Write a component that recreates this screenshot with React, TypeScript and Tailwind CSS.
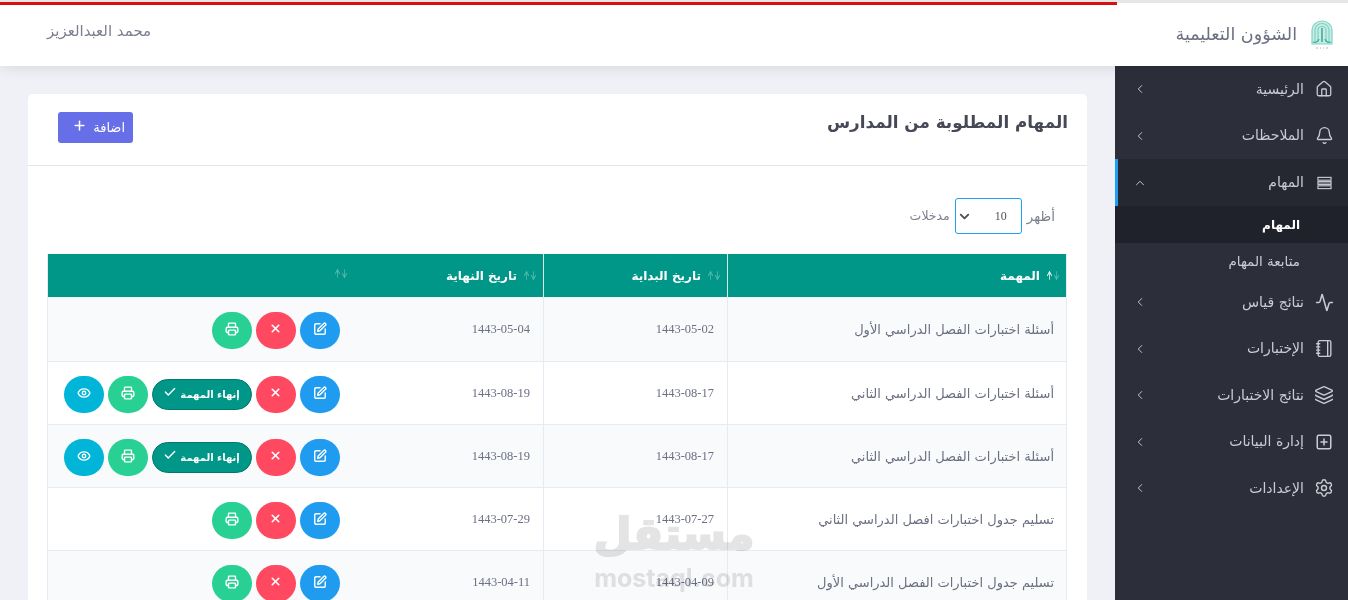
import React from 'react'
import { Bell, Check, ChevronDown, ChevronLeft, ChevronUp, Activity, Eye, House, Layers, Notebook, Plus, Printer, Settings, SquarePen, SquarePlus, X, ArrowUp, ArrowDown } from 'lucide-react'

const FONT = "font-['DejaVu_Sans',sans-serif]"

function ServerIcon({ className }: { className?: string }) {
  return (
    <svg className={className} viewBox="0 0 16 14" fill="none" stroke="currentColor" strokeWidth="1.2">
      <rect x="1" y="1" width="14" height="3" />
      <rect x="1" y="5.5" width="14" height="3" fill="currentColor" fillOpacity="0.35" />
      <rect x="1" y="10" width="14" height="3" />
    </svg>
  )
}

function Logo() {
  return (
    <svg className="w-[22px] h-[30px]" viewBox="0 0 22 30" fill="none" stroke="#7fd3c4" strokeWidth="1.2">
      <path d="M1 24V10a10 9 0 0 1 20 0v14H1z" fill="#c8ece5" />
      <path d="M4 22V10a7 6.5 0 0 1 14 0v12" />
      <path d="M7 22V10a4 3.5 0 0 1 8 0v12" />
      <path d="M11 8v14" stroke="#3fae9c" strokeWidth="1.6" />
      <path d="M2 22c3 1 5 0 6-3M20 22c-3 1-5 0-6-3" stroke="#3fae9c" />
      <path d="M5 28h2M9 28h1M12 28h1M15 28h2" stroke="#a9b8b6" />
    </svg>
  )
}

const MENU_TOP = [
  { label: 'الرئيسية', icon: <House className="w-[18px] h-[18px]" strokeWidth={1.7} /> },
  { label: 'الملاحظات', icon: <Bell className="w-[19px] h-[19px]" strokeWidth={1.7} /> },
]

const MENU_BOTTOM = [
  { label: 'نتائج قياس', icon: <Activity className="w-[19px] h-[19px]" strokeWidth={1.9} /> },
  { label: 'الإختبارات', icon: <Notebook className="w-[19px] h-[19px]" strokeWidth={1.7} /> },
  { label: 'نتائج الاختبارات', icon: <Layers className="w-[20px] h-[20px]" strokeWidth={1.7} /> },
  { label: 'إدارة البيانات', icon: <SquarePlus className="w-[18px] h-[18px]" strokeWidth={2} /> },
  { label: 'الإعدادات', icon: <Settings className="w-[20px] h-[20px]" strokeWidth={1.7} /> },
]

function MenuItem({ label, icon }: { label: string; icon: React.ReactNode }) {
  return (
    <div className="h-[46.5px] flex items-center pr-[14px] pl-[18px] text-[#c9ccd4]">
      <span className="w-[20px] flex justify-center shrink-0">{icon}</span>
      <span className="mr-[10px] text-[14px] flex-1">{label}</span>
      <ChevronLeft className="w-[14px] h-[14px] text-[#b9c4d0]" strokeWidth={1.7} />
    </div>
  )
}

const ROWS = [
  { task: 'أسئلة اختبارات الفصل الدراسي الأول', start: '1443-05-02', end: '1443-05-04', open: false },
  { task: 'أسئلة اختبارات الفصل الدراسي الثاني', start: '1443-08-17', end: '1443-08-19', open: true },
  { task: 'أسئلة اختبارات الفصل الدراسي الثاني', start: '1443-08-17', end: '1443-08-19', open: true },
  { task: 'تسليم جدول اختبارات افصل الدراسي الثاني', start: '1443-07-27', end: '1443-07-29', open: false },
  { task: 'تسليم جدول اختبارات الفصل الدراسي الأول', start: '1443-04-09', end: '1443-04-11', open: false },
]

function Sort({ active }: { active?: boolean }) {
  return (
    <span className="inline-flex items-center" dir="ltr">
      <ArrowUp preserveAspectRatio="none" className={active ? 'w-[7px] h-[13px] text-white' : 'w-[7px] h-[13px] text-[#5fbcae]'} strokeWidth={2.4} />
      <ArrowDown preserveAspectRatio="none" className="w-[7px] h-[13px] text-[#5fbcae]" strokeWidth={2.4} />
    </span>
  )
}

function RoundButton({ color, children }: { color: string; children: React.ReactNode }) {
  return (
    <span className={`w-10 h-[37px] rounded-full flex justify-center pt-[10px] text-white shrink-0 ${color}`}>
      {children}
    </span>
  )
}

function Actions({ open }: { open: boolean }) {
  return (
    <div className="flex items-center gap-1">
      <RoundButton color="bg-[#1f9cf0]"><SquarePen className="w-[14px] h-[14px]" strokeWidth={2.4} /></RoundButton>
      <RoundButton color="bg-[#ff4961]"><X className="w-[13px] h-[13px]" strokeWidth={3} /></RoundButton>
      {open && (
        <span className="w-[100px] h-[31px] rounded-full bg-[#009688] border border-[#00796b] text-white text-[10px] font-semibold flex items-center justify-center gap-[3px] shrink-0">
          إنهاء المهمة
          <Check className="w-[14px] h-[14px] -mt-[5px]" strokeWidth={2.4} />
        </span>
      )}
      <RoundButton color="bg-[#28d094]"><Printer className="w-[14px] h-[14px]" strokeWidth={2.4} /></RoundButton>
      {open && <RoundButton color="bg-[#00b5d8]"><Eye className="w-[14px] h-[14px]" strokeWidth={2.4} /></RoundButton>}
    </div>
  )
}

export default function App() {
  return (
    <div dir="rtl" className={`${FONT} relative h-[600px] overflow-hidden bg-[#eff1f7] text-[#6b6f82] flex flex-col`}>
      <header className="h-[66px] bg-white shrink-0 border-t-[3px] border-[#e6e6e6] shadow-[0_2px_14px_rgba(0,0,0,0.1)] relative z-10">
        <div className="h-[3px] bg-[#d90f0f] -mt-px mr-[231px]" />
        <div className="flex items-center justify-between pr-[15px] pl-[47px] h-[58px]">
          <div className="flex items-center gap-[14px] pt-[2px]">
            <Logo />
            <span className="text-[17.5px] text-[#6b6f82] -mt-px">الشؤون التعليمية</span>
          </div>
          <span className="text-[15px] text-[#7b7f8e] -mt-[5px]">محمد العبدالعزيز</span>
        </div>
      </header>

      <div className="flex flex-1 min-h-0">
        <aside className="w-[233px] shrink-0 bg-[#2c2f3a]">
          {MENU_TOP.map((m) => <MenuItem key={m.label} {...m} />)}
          <div className="h-[47px] flex items-center pr-[14px] pl-[15px] bg-[#252831] border-l-[3px] border-[#1e9ff2] text-[#c9ccd4]">
            <span className="w-[20px] flex justify-center shrink-0"><ServerIcon className="w-[15px] h-[14px]" /></span>
            <span className="mr-[10px] text-[14px] flex-1">المهام</span>
            <ChevronUp className="w-[14px] h-[14px] text-[#b9c4d0]" strokeWidth={1.7} />
          </div>
          <div className="h-[37px] flex items-center pr-[48px] bg-[#1f222a] text-white text-[12px] font-bold">المهام</div>
          <div className="h-[36px] flex items-center pr-[48px] text-[#c9ccd4] text-[13.5px]">متابعة المهام</div>
          {MENU_BOTTOM.map((m) => <MenuItem key={m.label} {...m} />)}
        </aside>

        <main className="flex-1 min-w-0 px-[28px] pt-[28px]">
          <section className="bg-white rounded-[5px] h-[600px]">
            <div className="h-[72px] border-b border-[#e4e6ea] flex items-start justify-between pr-[19px] pl-[30px]">
              <h1 className="text-[16.8px] font-semibold text-[#464855] mt-[16px]">المهام المطلوبة من المدارس</h1>
              <button className="w-[75px] h-[31px] mt-[18px] pr-[8px] bg-[#666ee8] rounded-[3px] text-white text-[13px] flex items-center gap-[6px]">
                اضافة
                <Plus className="w-[15px] h-[15px] -mt-[4px]" strokeWidth={2.4} />
              </button>
            </div>

            <div className="px-[20px] pt-[32px]">
              <div className="flex items-center gap-[5px] pr-[12px] h-[36px] text-[13.5px] text-[#7b7f8e]">
                أظهر
                <span className="w-[67px] h-[36px] rounded-[3px] border border-[#1e9ff2] flex items-center justify-between pr-[14px] pl-[1px] text-[#4e5154]">
                  <span className="font-['Liberation_Serif',serif] text-[12px]">10</span>
                  <ChevronDown className="w-[15px] h-[15px]" strokeWidth={3} />
                </span>
                <span className="text-[12.5px]">مدخلات</span>
              </div>

              <table className="w-[1020px] mt-[20px] table-fixed border-collapse border-r border-l border-[#e3ebf3]">
                <colgroup>
                  <col className="w-[339px]" />
                  <col className="w-[184px]" />
                  <col className="w-[190px]" />
                  <col />
                </colgroup>
                <thead>
                  <tr className="h-[43px] bg-[#009688] text-white text-[12px] font-semibold">
                    <th className="text-right pr-[6px] border-l border-[#d9e6e4]"><span className="flex items-center gap-[6px]"><Sort active />المهمة</span></th>
                    <th className="text-right pr-[6px] border-l border-[#d9e6e4]"><span className="flex items-center gap-[6px]"><Sort />تاريخ البداية</span></th>
                    <th className="text-right pr-[6px]"><span className="flex items-center gap-[6px]"><Sort />تاريخ النهاية</span></th>
                    <th className="text-right pr-[6px]"><Sort /></th>
                  </tr>
                </thead>
                <tbody>
                  {ROWS.map((r, i) => (
                    <tr key={i} className={i % 2 === 0 ? (i === 0 ? 'h-[64px] bg-[#f9fafc] border-b border-[#e3ebf3]' : 'h-[63px] bg-[#f9fafc] border-b border-[#e3ebf3]') : 'h-[63px] bg-white border-b border-[#e3ebf3]'}>
                      <td className="pr-[12px] pt-[2px] text-[13px] text-[#6b6f82] border-l border-[#e3ebf3]">{r.task}</td>
                      <td className="pr-[13px] pt-[2px] text-[12.5px] font-['Liberation_Serif',serif] text-[#6b6f82] border-l border-[#e3ebf3]">{r.start}</td>
                      <td className="pr-[13px] pt-[2px] text-[12.5px] font-['Liberation_Serif',serif] text-[#6b6f82]">{r.end}</td>
                      <td className="pr-[14px] pt-[3px]"><Actions open={r.open} /></td>
                    </tr>
                  ))}
                </tbody>
              </table>
            </div>
          </section>
        </main>
      </div>

      <div className="absolute left-[595px] top-[503px] w-[158px] flex flex-col items-center text-[#e4e4e4] mix-blend-multiply pointer-events-none leading-none">
        <span className="text-[44px] font-bold leading-[62px] [-webkit-text-stroke:2px_#e4e4e4]">مستقل</span>
        <span className="text-[25px] font-bold font-['Inter',sans-serif] leading-[26px]">mostaql.com</span>
      </div>
    </div>
  )
}
